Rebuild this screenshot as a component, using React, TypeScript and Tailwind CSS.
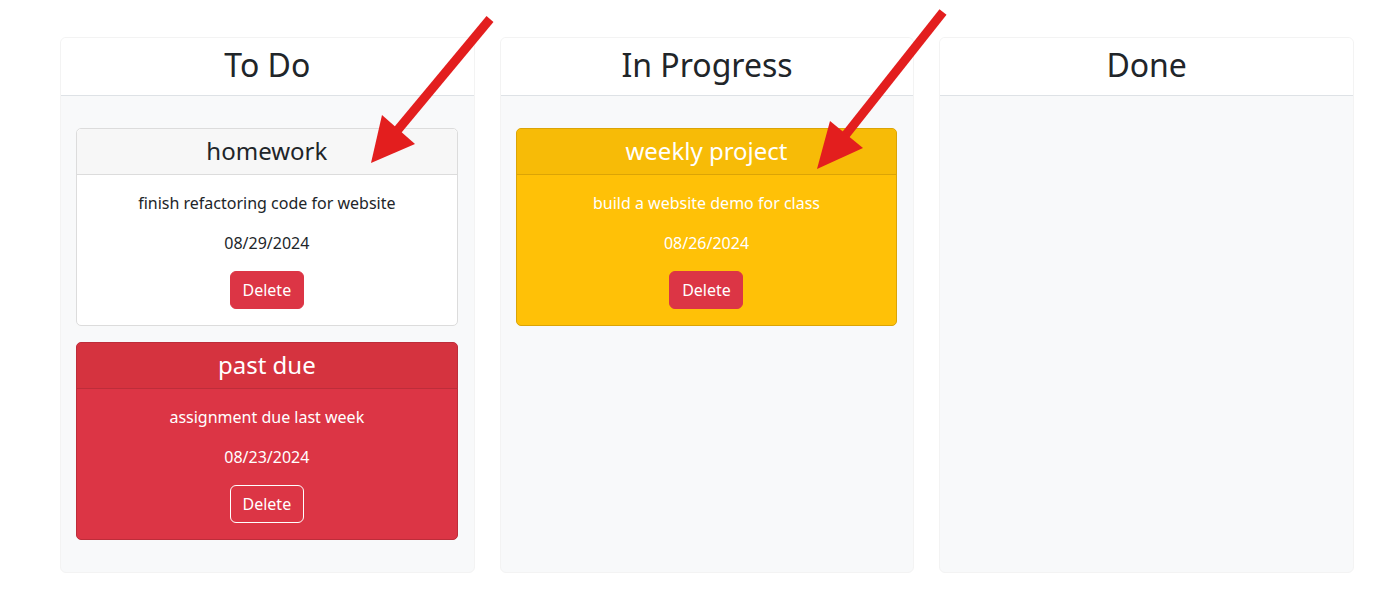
import React from 'react';

interface Task {
  title: string;
  description: string;
  date: string;
  status: 'normal' | 'warning' | 'late';
}

const columns: { title: string; tasks: Task[] }[] = [
  {
    title: 'To Do',
    tasks: [
      { title: 'homework', description: 'finish refactoring code for website', date: '08/29/2024', status: 'normal' },
      { title: 'past due', description: 'assignment due last week', date: '08/23/2024', status: 'late' },
    ],
  },
  {
    title: 'In Progress',
    tasks: [
      { title: 'weekly project', description: 'build a website demo for class', date: '08/26/2024', status: 'warning' },
    ],
  },
  { title: 'Done', tasks: [] },
];

const cardStyles = {
  normal: {
    card: 'bg-white border-[#dcdcdc] text-[#212529]',
    header: 'bg-[#f7f7f7] border-[#dcdcdc]',
    button: 'bg-[#dc3545] border-[#dc3545] text-white',
  },
  warning: {
    card: 'bg-[#ffc107] border-[#dba406] text-white',
    header: 'bg-[#f7bb07] border-[#dba406]',
    button: 'bg-[#dc3545] border-[#dc3545] text-white',
  },
  late: {
    card: 'bg-[#dc3545] border-[#bd2d3a] text-white',
    header: 'bg-[#d5333f] border-[#bd2d3a]',
    button: 'bg-transparent border-white text-white',
  },
};

const TaskCard = ({ task }: { task: Task }) => {
  const s = cardStyles[task.status];
  return (
    <div className={`rounded-[5px] border ${s.card}`}>
      <div className={`h-[46px] border-b flex items-center justify-center rounded-t-[5px] ${s.header}`}>
        <h4 className="text-[24px] leading-[1.2]">{task.title}</h4>
      </div>
      <div className="px-4 pt-4 pb-4 flex flex-col items-center text-[16px] leading-6">
        <p className="mb-4">{task.description}</p>
        <p className="mb-4">{task.date}</p>
        <button className={`h-[38px] w-[74px] rounded-[6px] border ${s.button}`}>Delete</button>
      </div>
    </div>
  );
};

const Arrow = ({ x1, y1, x2, y2, tip, c1, c2 }: { x1: number; y1: number; x2: number; y2: number; tip: [number, number]; c1: [number, number]; c2: [number, number] }) => (
  <>
    <line x1={x1} y1={y1} x2={x2} y2={y2} stroke="#e31e1e" strokeWidth={9} />
    <polygon points={`${tip[0]},${tip[1]} ${c1[0]},${c1[1]} ${c2[0]},${c2[1]}`} fill="#e31e1e" />
  </>
);

export default function App() {
  return (
    <div className="relative w-[1392px] h-[610px] bg-white" style={{ fontFamily: '"Noto Sans", "Open Sans", sans-serif' }}>
      <div className="pl-[60px] pt-[37px] w-[1354px] grid grid-cols-3 gap-[25px]">
        {columns.map((col) => (
          <div key={col.title} className="h-[536px] flex flex-col rounded-[6px] border border-[#f3f3f3] bg-[#f8f9fa] overflow-hidden">
            <div className="h-[58px] pb-[2px] bg-white border-b border-[#dee2e6] flex items-center justify-center">
              <h2 className="text-[32px] leading-[1.2] text-[#212529]">{col.title}</h2>
            </div>
            <div className="pl-[15px] pr-4 pt-8 flex flex-col gap-4">
              {col.tasks.map((t) => (
                <TaskCard key={t.title} task={t} />
              ))}
            </div>
          </div>
        ))}
      </div>
      <svg className="absolute left-0 top-0 pointer-events-none" width="1392" height="610">
        <Arrow x1={490} y1={19} x2={396} y2={132} tip={[371, 163]} c1={[382, 115]} c2={[415, 144]} />
        <Arrow x1={943} y1={12} x2={844} y2={137} tip={[817, 169]} c1={[830, 121]} c2={[863, 148]} />
      </svg>
    </div>
  );
}
